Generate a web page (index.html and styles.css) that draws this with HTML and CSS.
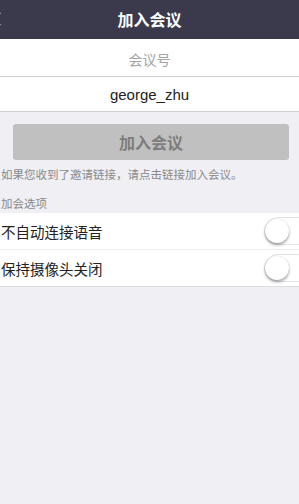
FILE: index.html
```html
<!DOCTYPE html>
<html lang="zh-CN">
<head>
  <meta charset="UTF-8">
  <meta name="viewport" content="width=device-width, initial-scale=1.0">
  <title>加入会议</title>
  <link rel="stylesheet" href="styles.css">
</head>
<body>
  <header class="nav-bar">
    <span class="back">
      <svg width="10" height="16" viewBox="0 0 10 16"><path d="M8 1.5 L1.5 8 L8 14.5" fill="none" stroke="#fff" stroke-width="2"/></svg>
    </span>
    <h1>加入会议</h1>
  </header>

  <!-- Meeting inputs -->
  <div class="field-group">
    <div class="field placeholder">会议号</div>
    <div class="field name">george_zhu</div>
  </div>

  <div class="join-wrap">
    <button class="join-btn" disabled>加入会议</button>
  </div>
  <p class="hint">如果您收到了邀请链接，请点击链接加入会议。</p>

  <!-- Options -->
  <div class="section-title">加会选项</div>
  <ul class="options">
    <li>
      <span>不自动连接语音</span>
      <span class="switch"><span class="knob"></span></span>
    </li>
    <li>
      <span>保持摄像头关闭</span>
      <span class="switch"><span class="knob"></span></span>
    </li>
  </ul>
</body>
</html>
```

FILE: styles.css
```css
html, body {
  margin: 0;
  padding: 0;
  overflow: hidden;
}
body {
  font-family: "Liberation Sans", "Noto Sans CJK SC", sans-serif;
  background-color: #efeff4;
  min-height: 504px;
  color: #222;
}
.nav-bar {
  height: 39px;
  background-color: #3b3a4d;
  display: flex;
  align-items: center;
}
.nav-bar .back {
  display: flex;
  margin-left: -8px;
  margin-top: -1px;
}
.nav-bar h1 {
  flex: 1;
  margin: -1px 0 0 -2px;
  text-align: center;
  font-size: 16px;
  font-weight: bold;
  color: #fff;
}
.field-group {
  background-color: #fff;
}
.field {
  display: flex;
  align-items: center;
  justify-content: center;
  border-bottom: 1px solid #cfcfd3;
}
.field.placeholder {
  height: 38px;
  color: #a3a3a3;
  font-size: 14px;
  padding-top: 2px;
  box-sizing: border-box;
}
.field.name {
  height: 34px;
  font-size: 15px;
  color: #222;
}
.join-wrap {
  padding: 12px 10px 0 13px;
}
.join-btn {
  display: block;
  width: 276px;
  height: 36px;
  border: none;
  border-radius: 3px;
  background-color: #c0c0c0;
  color: #7d7d7d;
  font-family: inherit;
  font-size: 16px;
  font-weight: bold;
  padding: 0;
}
.hint {
  margin: 8px 0 0 0;
  padding-left: 1px;
  font-size: 11.5px;
  line-height: 14px;
  color: #8a8a8a;
}
.section-title {
  margin-top: 15px;
  padding-left: 1px;
  font-size: 11.5px;
  line-height: 14px;
  color: #8a8a8a;
}
.options {
  list-style: none;
  margin: 2px 0 0 0;
  padding: 0;
  background-color: #fff;
  border-bottom: 1px solid #dcdce0;
}
.options li {
  height: 36px;
  display: flex;
  align-items: center;
  justify-content: space-between;
  padding-left: 1px;
  font-size: 14.5px;
  color: #222;
}
.options li + li {
  border-top: 1px solid #ececef;
}
.switch {
  position: relative;
  width: 48px;
  height: 28px;
  border: 1px solid #e2e2e6;
  border-radius: 15px;
  background-color: #fff;
  margin-right: -13px;
  box-sizing: border-box;
}
.knob {
  position: absolute;
  left: 0;
  top: 1px;
  width: 24px;
  height: 24px;
  border-radius: 50%;
  background-color: #fff;
  box-shadow: 0 2px 3px rgba(0, 0, 0, 0.35), 0 0 1px rgba(0, 0, 0, 0.2);
}
```
